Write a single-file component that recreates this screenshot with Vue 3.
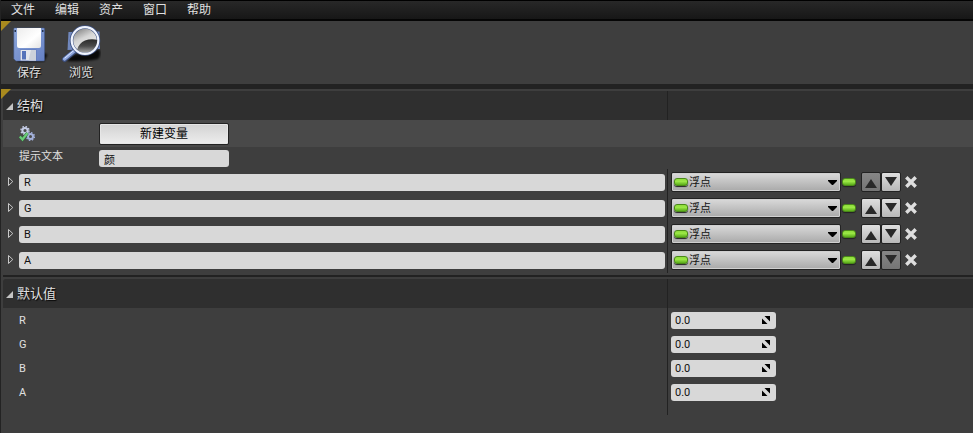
<script setup>
import { ref, reactive } from 'vue'

const menus = ['文件', '编辑', '资产', '窗口', '帮助']
const tooltip = ref('颜')
const members = reactive([
  { name: 'R', type: '浮点', value: '0.0' },
  { name: 'G', type: '浮点', value: '0.0' },
  { name: 'B', type: '浮点', value: '0.0' },
  { name: 'A', type: '浮点', value: '0.0' },
])
const defaults = reactive(['R', 'G', 'B', 'A'].map((name) => ({ name, value: '0.0' })))

function move(i, step) {
  const [m] = members.splice(i, 1)
  members.splice(i + step, 0, m)
}
</script>

<template>
  <div class="editor">
    <nav class="menubar">
      <button v-for="m in menus" :key="m" class="menu" type="button">{{ m }}</button>
    </nav>

    <div class="toolbar tabbed">
      <button class="tool" type="button">
        <svg class="tool-icon" width="40" height="40" viewBox="0 0 40 40" aria-hidden="true">
          <defs>
            <linearGradient id="disk" x1="0" y1="0" x2="1" y2="1">
              <stop offset="0" stop-color="#8ea8dc" />
              <stop offset="1" stop-color="#6580c4" />
            </linearGradient>
            <linearGradient id="paper" x1="0" y1="0" x2="1" y2="1">
              <stop offset="0" stop-color="#ececec" />
              <stop offset="0.6" stop-color="#ffffff" />
              <stop offset="1" stop-color="#e4e4e4" />
            </linearGradient>
            <filter id="soft"><feGaussianBlur stdDeviation="1" /></filter>
          </defs>
          <path d="M8 34L35 28L38.500 29.500L35 36.500L9 37Z" fill="#000" opacity=".8" filter="url(#soft)" />
          <path d="M5.500 3H34.500Q35.500 3 35.500 4V35Q35.500 36 34.500 36H7L4.800 33.800V4Q4.800 3 5.500 3Z" fill="url(#disk)" stroke="#40588f" stroke-width=".5" />
          <path d="M8 3H32V21Q32 23 30 23H10Q8 23 8 21Z" fill="url(#paper)" />
          <path d="M5.500 5h1.500v2H5.500zM33 5h1.500v2H33z" fill="#25334f" />
          <path d="M11 24.500H27.500V36H11Z" fill="#5a74b8" />
          <path d="M11.500 25H27V35.500H11.500Z" fill="#e4e7ec" />
          <path d="M13 26H17V34.500H13Z" fill="#5674ba" />
          <path d="M22 25H27V35.500H19.500Z" fill="#cbd1db" />
        </svg>
        <span>保存</span>
      </button>
      <button class="tool" type="button">
        <svg class="tool-icon" width="40" height="40" viewBox="0 0 40 40" aria-hidden="true">
          <defs>
            <linearGradient id="lens" x1="0" y1="0" x2=".5" y2="1">
              <stop offset="0" stop-color="#666" />
              <stop offset=".5" stop-color="#d5d5d5" />
              <stop offset="1" stop-color="#f4f4f4" />
            </linearGradient>
            <linearGradient id="dark" x1="0" y1="0" x2="0" y2="1">
              <stop offset="0" stop-color="#2a2a2a" />
              <stop offset=".5" stop-color="#4a4a4a" />
              <stop offset="1" stop-color="#a5a5a5" />
            </linearGradient>
            <filter id="soft2"><feGaussianBlur stdDeviation="1" /></filter>
          </defs>
          <path d="M6 36Q13 26 25 30L38 24Q41 29 37 34Q24 37 6 36Z" fill="#000" opacity=".85" filter="url(#soft2)" />
          <path d="M7.500 7L38.500 6.500L39 24L6.500 25Z" fill="#7188bd" />
          <path d="M3.500 34.500L15 25" stroke="#3c4e7b" stroke-width="5" stroke-linecap="round" />
          <path d="M3.500 34L14.500 25" stroke="#91a9df" stroke-width="3.500" stroke-linecap="round" />
          <path d="M4 33L14 24.500" stroke="#dce6ff" stroke-width="1" stroke-linecap="round" />
          <circle cx="24" cy="15.500" r="13.500" fill="url(#lens)" stroke="#3e5284" stroke-width="3.500" />
          <path d="M16 25Q18 18 24 15.500Q30 13.300 37 15Q36.500 22 30.500 26Q23 30 16 25Z" fill="url(#dark)" />
          <circle cx="24" cy="15.500" r="13.300" fill="none" stroke="#f1f5ff" stroke-width="2.200" />
        </svg>
        <span>浏览</span>
      </button>
    </div>

    <main class="details tabbed">
      <section class="section structure">
        <header class="split head">
          <h2 class="title"><i class="open"></i>结构</h2>
          <div class="cell"></div>
        </header>
        <div class="new-row">
          <svg class="gears" width="16" height="16" viewBox="0 0 16 16" aria-hidden="true">
            <circle cx="6" cy="4.500" r="2.600" fill="none" stroke="#c5cce6" stroke-width="2" />
            <circle cx="6" cy="4.500" r="4" fill="none" stroke="#c5cce6" stroke-width="1.400" stroke-dasharray="1.570 1.570" />
            <circle cx="11.500" cy="10.500" r="2.500" fill="none" stroke="#a3b1db" stroke-width="2" />
            <circle cx="11.500" cy="10.500" r="3.900" fill="none" stroke="#a3b1db" stroke-width="1.400" stroke-dasharray="1.530 1.530" />
            <path d="M.8 10.500L3.500 13.500L8.500 7" fill="none" stroke="#2e6a38" stroke-width="3" />
            <path d="M.8 10.500L3.500 13.500L8.500 7" fill="none" stroke="#6bcb78" stroke-width="2.200" />
          </svg>
          <button class="new-button" type="button">新建变量</button>
        </div>
        <div class="hint-row">
          <label for="tooltip">提示文本</label>
          <input id="tooltip" v-model="tooltip" class="field" type="text" />
        </div>
        <div class="members">
          <div v-for="(m, i) in members" :key="i" class="split member">
            <div class="name-cell">
              <button class="expander" type="button" :aria-label="`展开 ${m.name}`">
                <svg width="7" height="12" viewBox="0 0 7 12"><path d="M1.500 1.500V9.500L5.800 5.500Z" fill="none" stroke="#c8c8c8" /></svg>
              </button>
              <input v-model="m.name" class="field" type="text" aria-label="变量名" />
            </div>
            <div class="cell type-cell">
              <div class="combo">
                <i class="pill"></i>
                <select v-model="m.type" aria-label="变量类型">
                  <option>浮点</option>
                </select>
                <svg class="caret" width="9" height="5" viewBox="0 0 9 5"><path d="M0 0H9V1L5 5H4L0 1Z" fill="#000" /></svg>
              </div>
              <button class="container" type="button" aria-label="容器类型"><i class="pill"></i></button>
              <button class="arrow" type="button" aria-label="上移" :disabled="i === 0" @click="move(i, -1)">
                <svg width="12" height="9" viewBox="0 0 12 9"><path d="M6 0L12 9H0Z" fill="#292929" /></svg>
              </button>
              <button class="arrow down" type="button" aria-label="下移" :disabled="i === members.length - 1" @click="move(i, 1)">
                <svg width="12" height="9" viewBox="0 0 12 9"><path d="M6 9L12 0H0Z" fill="#292929" /></svg>
              </button>
              <button class="remove" type="button" aria-label="删除" @click="members.splice(i, 1)">
                <svg width="12" height="12" viewBox="0 0 12 12"><path d="M2.500 2.500L9.500 9.500M9.500 2.500L2.500 9.500" stroke="#dedede" stroke-width="3.400" stroke-linecap="square" /></svg>
              </button>
            </div>
          </div>
        </div>
      </section>

      <section class="section defaults">
        <header class="split head">
          <h2 class="title"><i class="open"></i>默认值</h2>
          <div class="cell"></div>
        </header>
        <div v-for="d in defaults" :key="d.name" class="split default-row">
          <label :for="`value-${d.name}`">{{ d.name }}</label>
          <div class="cell value-cell">
            <div class="number">
              <input :id="`value-${d.name}`" v-model="d.value" class="field" type="text" inputmode="decimal" />
              <svg class="spin" width="8" height="8" viewBox="0 0 8 8"><path d="M2.500 0H8V5.500ZM0 2.500V8H5.500Z" fill="#000" /></svg>
            </div>
          </div>
        </div>
        <div class="split tail"><div></div><div class="cell"></div></div>
      </section>
    </main>
  </div>
</template>

<style>
body {
  margin: 0;
  background: #3e3e3e;
}
</style>

<style scoped>
.editor {
  display: flex;
  flex-direction: column;
  min-height: 100vh;
  box-sizing: border-box;
  border-left: 1px solid #232323;
  background: #222;
  color: #e0e0e0;
  font-family: Roboto, "Noto Sans CJK SC", sans-serif;
  font-size: 11px;
}

button,
input,
select {
  box-sizing: border-box;
  margin: 0;
  padding: 0;
  border: 0;
  background: none;
  color: inherit;
  font: inherit;
}

svg {
  display: block;
}

.menubar {
  display: flex;
  height: 18px;
  padding-right: 10px;
  border-top: 1px solid #000;
  border-bottom: 2px solid #050505;
  background: linear-gradient(#282828, #171717);
}

.menu {
  padding: 0 10px;
  font-size: 12px;
  line-height: 18px;
}

.tabbed {
  position: relative;
}

.tabbed::before {
  content: "";
  position: absolute;
  top: 0;
  left: 0;
  width: 10px;
  height: 10px;
  background: #a98a1e;
  clip-path: polygon(0 0, 100% 0, 0 100%);
}

.toolbar {
  display: flex;
  gap: 12px;
  padding: 4px 8px 3px;
  background: #3e3e3e;
}

.tool {
  display: flex;
  flex-direction: column;
  align-items: center;
  width: 40px;
  font-size: 12px;
  line-height: 16px;
  text-shadow: 1px 1px 1px #000;
}

.details {
  flex: 1;
  margin-top: 5px;
  padding-top: 2px;
  background: #3e3e3e;
}

.section {
  margin-left: 2px;
}

.split {
  display: grid;
  grid-template-columns: minmax(0, 1fr) 306px;
}

.cell {
  border-left: 1px solid #222;
}

.head {
  height: 29px;
  border-top-left-radius: 3px;
  background: #2f2f2f;
}

.title {
  display: flex;
  align-items: center;
  gap: 4px;
  margin: 0;
  padding: 0 0 2px 3px;
  font-size: 13px;
  font-weight: 400;
  text-shadow: 1px 1px 1px #000;
}

.open {
  width: 7px;
  height: 7px;
  margin-top: 4px;
  background: #c4c4c4;
  clip-path: polygon(100% 0, 100% 100%, 0 100%);
}

.new-row {
  display: flex;
  align-items: center;
  gap: 64px;
  height: 27px;
  padding-left: 16px;
  background: #494949;
}

.new-button {
  width: 130px;
  height: 22px;
  border: 1px solid #222;
  border-radius: 2px;
  background: linear-gradient(#d2d2d2, #ededed);
  box-shadow: inset 0 0 0 1px #e6e6e6;
  color: #000;
  font-size: 12px;
  line-height: 20px;
}

.hint-row {
  display: flex;
  height: 22px;
  padding-left: 16px;
}

.hint-row label {
  width: 80px;
  line-height: 20px;
}

.hint-row .field {
  width: 130px;
  margin-top: 3px;
}

.field {
  height: 17px;
  padding: 0 5px;
  border-radius: 3px;
  background: #d8d8d8;
  color: #111;
}

.members {
  padding-bottom: 2px;
}

.member {
  height: 26px;
}

.name-cell {
  display: flex;
  align-items: center;
  gap: 5px;
  padding: 0 2px 0 4px;
}

.expander {
  width: 7px;
}

.name-cell .field {
  flex: 1;
  min-width: 0;
}

.type-cell {
  display: flex;
  align-items: center;
  padding-left: 3px;
}

.combo {
  position: relative;
  width: 170px;
}

.combo select {
  appearance: none;
  display: block;
  width: 100%;
  height: 20px;
  padding-left: 17px;
  border: 1px solid #222;
  border-radius: 2px;
  background: linear-gradient(#dadada, #a9a9a9);
  box-shadow: inset 0 0 0 1px #d0d0d0;
  color: #111;
}

.combo .pill {
  position: absolute;
  top: 6px;
  left: 3px;
}

.caret {
  position: absolute;
  top: 8px;
  right: 4px;
  pointer-events: none;
}

.pill {
  display: block;
  box-sizing: border-box;
  width: 14px;
  height: 8px;
  border: 1px solid #4a8a18;
  border-radius: 3px;
  background: linear-gradient(#8fdc3c, #9be845 40%, #5aab1b);
  box-shadow: 0 1px 1px #222;
}

.container {
  width: 14px;
  margin: 0 5px 0 1px;
}

.arrow {
  display: flex;
  align-items: center;
  justify-content: center;
  width: 20px;
  height: 20px;
  padding-top: 2px;
  border: 1px solid #222;
  border-radius: 2px;
  background: linear-gradient(#dedede, #b8b8b8);
}

.arrow.down {
  padding: 0 0 2px;
}

.arrow:disabled {
  background: linear-gradient(#868686, #757575);
}

.remove {
  margin-left: 4px;
}

.structure {
  border-bottom: 2px solid #222;
}

.defaults {
  margin-top: 2px;
}

.default-row {
  height: 24px;
}

.default-row label {
  padding: 2px 0 0 16px;
  line-height: 22px;
}

.value-cell {
  display: flex;
  align-items: center;
  padding-left: 3px;
}

.number {
  position: relative;
  width: 105px;
}

.number .field {
  display: block;
  width: 100%;
  padding-left: 4px;
}

.spin {
  position: absolute;
  top: 4px;
  right: 6px;
  pointer-events: none;
}

.tail {
  height: 11px;
}
</style>
